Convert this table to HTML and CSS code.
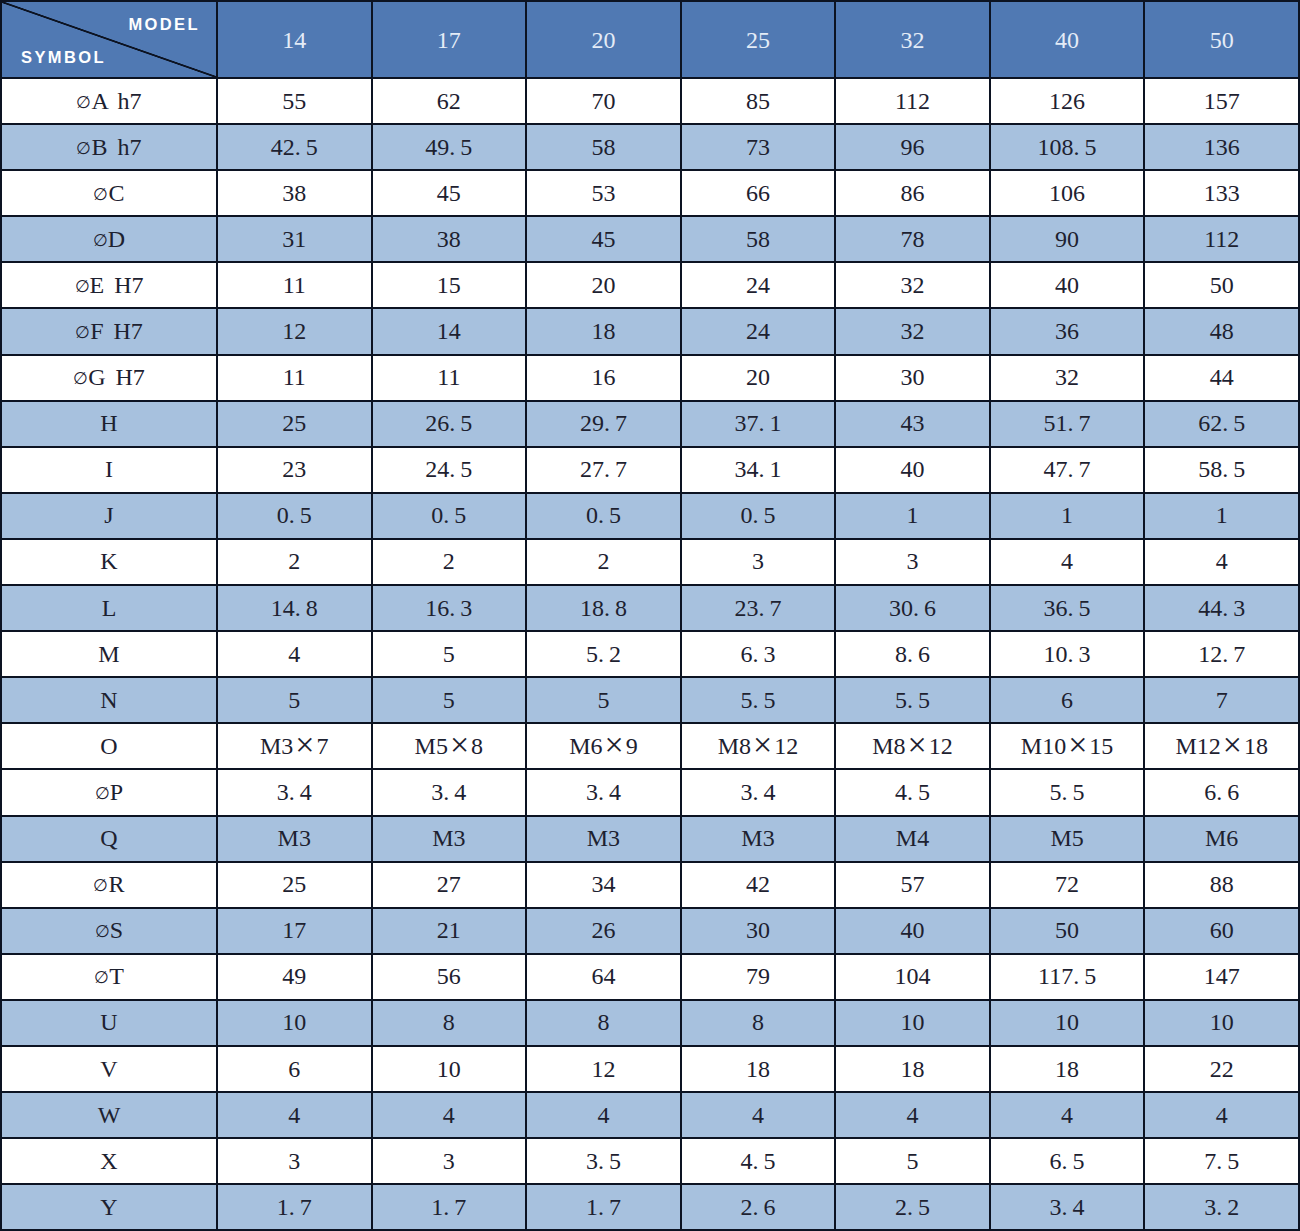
FILE: index.html
```html
<!DOCTYPE html>
<html>
<head>
<meta charset="utf-8">
<link rel="stylesheet" href="styles.css">
</head>
<body>
<table class="spec">
<colgroup><col class="c-sym"><col><col><col><col><col><col><col></colgroup>
<thead>
<tr class="head">
<th class="corner"><div class="corner-in"><span class="model">MODEL</span><span class="symbol">SYMBOL</span></div></th>
<th>14</th><th>17</th><th>20</th><th>25</th><th>32</th><th>40</th><th>50</th>
</tr>
</thead>
<tbody>
<tr><td class="sym"><span class="dia">∅</span>A h7</td><td>55</td><td>62</td><td>70</td><td>85</td><td>112</td><td>126</td><td>157</td></tr>
<tr class="alt"><td class="sym"><span class="dia">∅</span>B h7</td><td>42<span class="d">.</span>5</td><td>49<span class="d">.</span>5</td><td>58</td><td>73</td><td>96</td><td>108<span class="d">.</span>5</td><td>136</td></tr>
<tr><td class="sym"><span class="dia">∅</span>C</td><td>38</td><td>45</td><td>53</td><td>66</td><td>86</td><td>106</td><td>133</td></tr>
<tr class="alt"><td class="sym"><span class="dia">∅</span>D</td><td>31</td><td>38</td><td>45</td><td>58</td><td>78</td><td>90</td><td>112</td></tr>
<tr><td class="sym"><span class="dia">∅</span>E H7</td><td>11</td><td>15</td><td>20</td><td>24</td><td>32</td><td>40</td><td>50</td></tr>
<tr class="alt"><td class="sym"><span class="dia">∅</span>F H7</td><td>12</td><td>14</td><td>18</td><td>24</td><td>32</td><td>36</td><td>48</td></tr>
<tr><td class="sym"><span class="dia">∅</span>G H7</td><td>11</td><td>11</td><td>16</td><td>20</td><td>30</td><td>32</td><td>44</td></tr>
<tr class="alt"><td class="sym">H</td><td>25</td><td>26<span class="d">.</span>5</td><td>29<span class="d">.</span>7</td><td>37<span class="d">.</span>1</td><td>43</td><td>51<span class="d">.</span>7</td><td>62<span class="d">.</span>5</td></tr>
<tr><td class="sym">I</td><td>23</td><td>24<span class="d">.</span>5</td><td>27<span class="d">.</span>7</td><td>34<span class="d">.</span>1</td><td>40</td><td>47<span class="d">.</span>7</td><td>58<span class="d">.</span>5</td></tr>
<tr class="alt"><td class="sym">J</td><td>0<span class="d">.</span>5</td><td>0<span class="d">.</span>5</td><td>0<span class="d">.</span>5</td><td>0<span class="d">.</span>5</td><td>1</td><td>1</td><td>1</td></tr>
<tr><td class="sym">K</td><td>2</td><td>2</td><td>2</td><td>3</td><td>3</td><td>4</td><td>4</td></tr>
<tr class="alt"><td class="sym">L</td><td>14<span class="d">.</span>8</td><td>16<span class="d">.</span>3</td><td>18<span class="d">.</span>8</td><td>23<span class="d">.</span>7</td><td>30<span class="d">.</span>6</td><td>36<span class="d">.</span>5</td><td>44<span class="d">.</span>3</td></tr>
<tr><td class="sym">M</td><td>4</td><td>5</td><td>5<span class="d">.</span>2</td><td>6<span class="d">.</span>3</td><td>8<span class="d">.</span>6</td><td>10<span class="d">.</span>3</td><td>12<span class="d">.</span>7</td></tr>
<tr class="alt"><td class="sym">N</td><td>5</td><td>5</td><td>5</td><td>5<span class="d">.</span>5</td><td>5<span class="d">.</span>5</td><td>6</td><td>7</td></tr>
<tr><td class="sym">O</td><td>M3<span class="x">×</span>7</td><td>M5<span class="x">×</span>8</td><td>M6<span class="x">×</span>9</td><td>M8<span class="x">×</span>12</td><td>M8<span class="x">×</span>12</td><td>M10<span class="x">×</span>15</td><td>M12<span class="x">×</span>18</td></tr>
<tr><td class="sym"><span class="dia">∅</span>P</td><td>3<span class="d">.</span>4</td><td>3<span class="d">.</span>4</td><td>3<span class="d">.</span>4</td><td>3<span class="d">.</span>4</td><td>4<span class="d">.</span>5</td><td>5<span class="d">.</span>5</td><td>6<span class="d">.</span>6</td></tr>
<tr class="alt"><td class="sym">Q</td><td>M3</td><td>M3</td><td>M3</td><td>M3</td><td>M4</td><td>M5</td><td>M6</td></tr>
<tr><td class="sym"><span class="dia">∅</span>R</td><td>25</td><td>27</td><td>34</td><td>42</td><td>57</td><td>72</td><td>88</td></tr>
<tr class="alt"><td class="sym"><span class="dia">∅</span>S</td><td>17</td><td>21</td><td>26</td><td>30</td><td>40</td><td>50</td><td>60</td></tr>
<tr><td class="sym"><span class="dia">∅</span>T</td><td>49</td><td>56</td><td>64</td><td>79</td><td>104</td><td>117<span class="d">.</span>5</td><td>147</td></tr>
<tr class="alt"><td class="sym">U</td><td>10</td><td>8</td><td>8</td><td>8</td><td>10</td><td>10</td><td>10</td></tr>
<tr><td class="sym">V</td><td>6</td><td>10</td><td>12</td><td>18</td><td>18</td><td>18</td><td>22</td></tr>
<tr class="alt"><td class="sym">W</td><td>4</td><td>4</td><td>4</td><td>4</td><td>4</td><td>4</td><td>4</td></tr>
<tr><td class="sym">X</td><td>3</td><td>3</td><td>3<span class="d">.</span>5</td><td>4<span class="d">.</span>5</td><td>5</td><td>6<span class="d">.</span>5</td><td>7<span class="d">.</span>5</td></tr>
<tr class="alt"><td class="sym">Y</td><td>1<span class="d">.</span>7</td><td>1<span class="d">.</span>7</td><td>1<span class="d">.</span>7</td><td>2<span class="d">.</span>6</td><td>2<span class="d">.</span>5</td><td>3<span class="d">.</span>4</td><td>3<span class="d">.</span>2</td></tr>
</tbody>
</table>
</body>
</html>
```
FILE: styles.css
```css
html, body {
  margin: 0;
  padding: 0;
  background: #ffffff;
}

.spec {
  width: 1300px;
  border-collapse: collapse;
  table-layout: fixed;
  font-family: "Liberation Serif", "Times New Roman", serif;
  font-size: 24px;
  color: #1d2130;
}

.c-sym {
  width: 216px;
}

.spec th,
.spec td {
  border: 2px solid #0c1322;
  text-align: center;
  vertical-align: middle;
  padding: 0;
  white-space: nowrap;
}

.head {
  height: 75px;
}

.head th {
  background: #5079b3;
  color: #e4ecf7;
  font-weight: normal;
  font-size: 24px;
  padding-top: 2px;
}

.spec tbody tr {
  height: 46.1px;
}

.spec tbody td {
  background: #ffffff;
}

.spec tbody tr.alt td {
  background: #a7c1de;
}

.head th.corner {
  padding: 0;
  background:
    linear-gradient(to top right, transparent calc(50% - 1.3px), #0c1322 calc(50% - 0.6px), #0c1322 calc(50% + 0.6px), transparent calc(50% + 1.3px)),
    #5079b3;
}

.corner-in {
  display: flex;
  flex-direction: column;
  height: 75px;
  padding: 12px 18px 10px 19px;
  box-sizing: border-box;
  font-family: "Liberation Sans", Arial, sans-serif;
  font-weight: bold;
  font-size: 16.5px;
  letter-spacing: 2.4px;
  color: #ffffff;
}

.model {
  align-self: flex-end;
  line-height: 20px;
  margin-right: -2px;
}

.symbol {
  align-self: flex-start;
  line-height: 20px;
  margin-top: auto;
}

.sym {
  word-spacing: 4px;
}

.dia {
  font-size: 17px;
  position: relative;
  top: -1px;
}

.d {
  margin-right: 5px;
}

.x {
  font-size: 34px;
  line-height: 0;
  margin: 0 2px;
  position: relative;
  top: 2px;
}
```
